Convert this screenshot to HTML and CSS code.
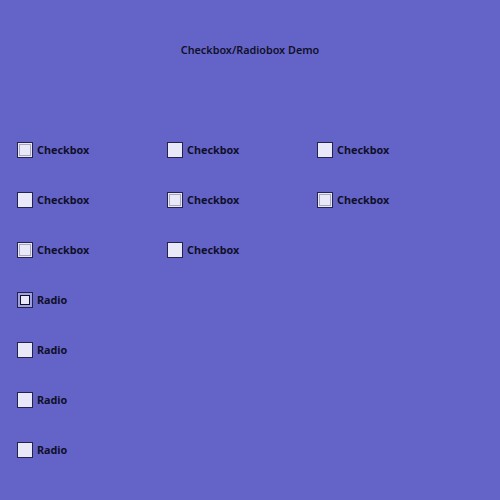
FILE: index.html
```html
<!DOCTYPE html>
<html>
<head>
<meta charset="utf-8">
<link rel="stylesheet" href="styles.css">
</head>
<body>
<div class="title">Checkbox/Radiobox Demo</div>
<div class="grid">
  <label class="item"><span class="box ring"></span><span class="label">Checkbox</span></label>
  <label class="item"><span class="box"></span><span class="label">Checkbox</span></label>
  <label class="item"><span class="box"></span><span class="label">Checkbox</span></label>

  <label class="item"><span class="box"></span><span class="label">Checkbox</span></label>
  <label class="item"><span class="box ring"></span><span class="label">Checkbox</span></label>
  <label class="item"><span class="box ring"></span><span class="label">Checkbox</span></label>

  <label class="item"><span class="box ring"></span><span class="label">Checkbox</span></label>
  <label class="item"><span class="box"></span><span class="label">Checkbox</span></label>
  <span class="item"></span>

  <label class="item"><span class="box radio-on"></span><span class="label">Radio</span></label>
  <span class="item"></span><span class="item"></span>
  <label class="item"><span class="box"></span><span class="label">Radio</span></label>
  <span class="item"></span><span class="item"></span>
  <label class="item"><span class="box"></span><span class="label">Radio</span></label>
  <span class="item"></span><span class="item"></span>
  <label class="item"><span class="box"></span><span class="label">Radio</span></label>
  <span class="item"></span><span class="item"></span>
</div>
</body>
</html>
```
FILE: styles.css
```css
html, body {
  margin: 0;
  padding: 0;
  background: #6464c8;
  width: 500px;
  height: 500px;
  overflow: hidden;
  font-family: "Noto Sans", "DejaVu Sans", sans-serif;
  color: #10102a;
}
.title {
  height: 100px;
  line-height: 100px;
  text-align: center;
  font-size: 10.8px;
  font-weight: 600;
}
.grid {
  margin-top: 25px;
  padding-left: 17px;
  display: grid;
  grid-template-columns: 150px 150px 150px;
  grid-auto-rows: 50px;
}
.item {
  display: flex;
  align-items: center;
  gap: 4px;
}
.box {
  box-sizing: border-box;
  width: 16px;
  height: 16px;
  border: 1px solid #22224a;
  background: #e8e8f8;
  flex: none;
}
.box.ring {
  box-shadow: inset 0 0 0 1px #e8e8f8, inset 0 0 0 2px #a8a8b8;
}
.box.radio-on {
  background: #e8e8f8;
  box-shadow: inset 0 0 0 2px #a0a0e0, inset 0 0 0 3px #10102a;
}
.label {
  font-size: 10.8px;
  font-weight: 700;
  padding-bottom: 2px;
}
```
